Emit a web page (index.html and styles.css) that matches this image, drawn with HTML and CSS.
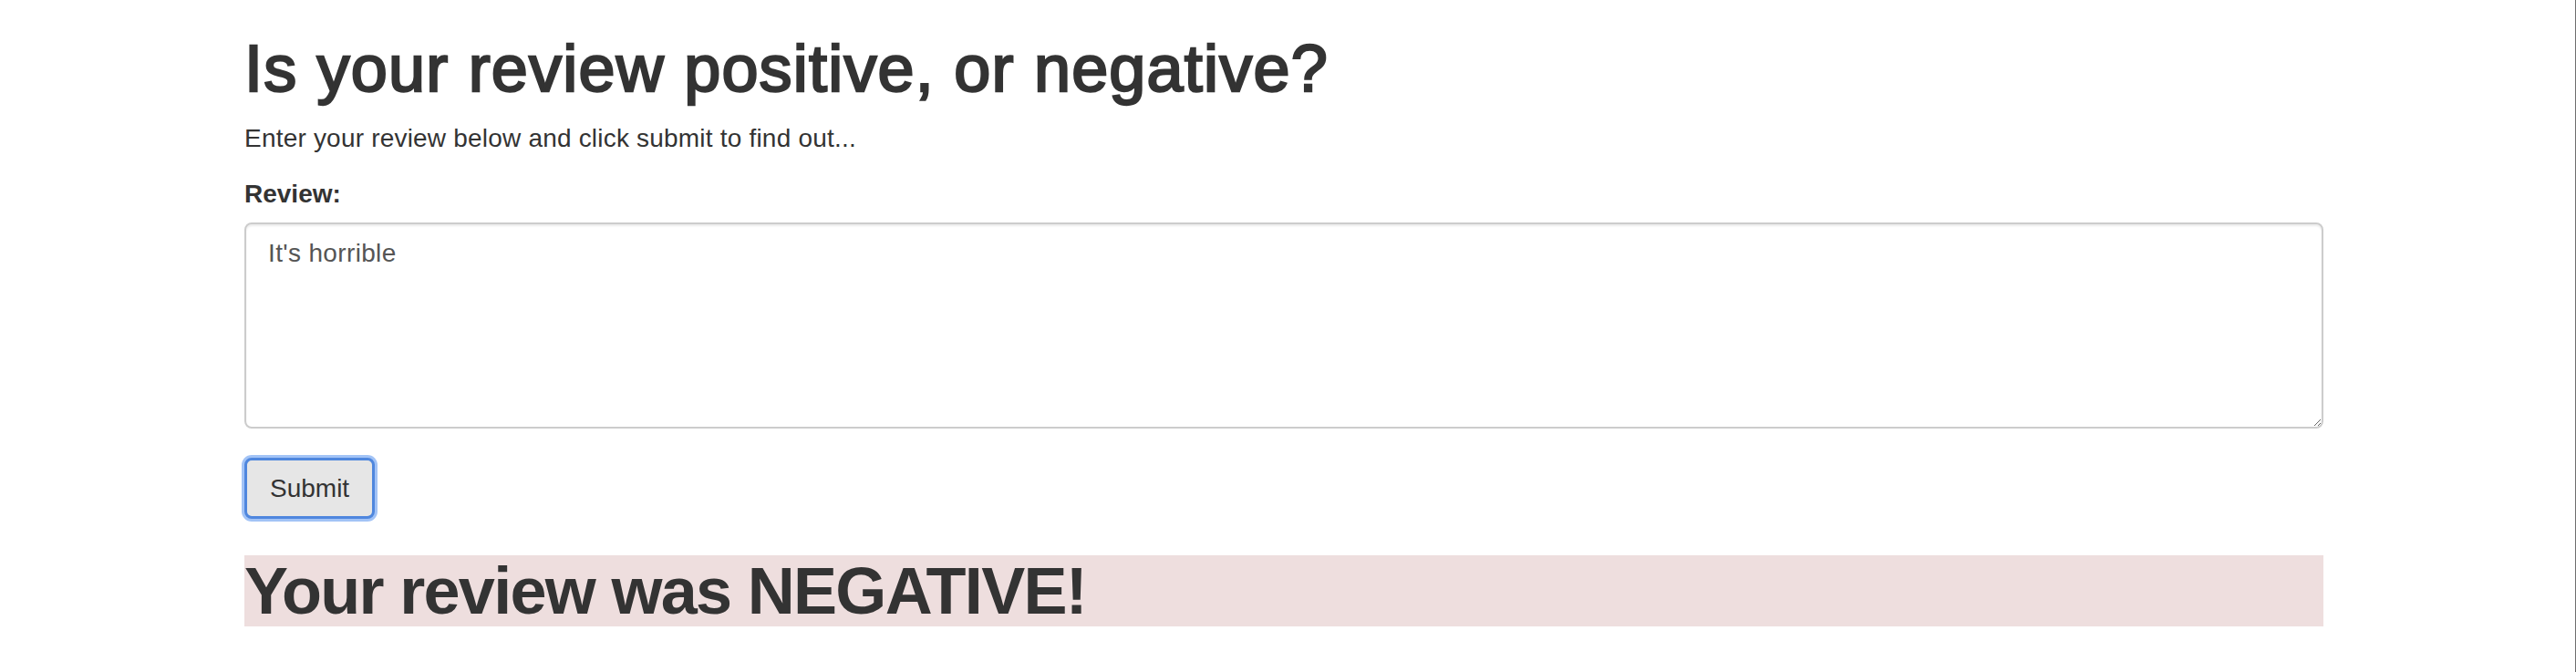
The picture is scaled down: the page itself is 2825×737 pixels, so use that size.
FILE: index.html
```html
<!DOCTYPE html>
<html lang="en">
<head>
<meta charset="utf-8">
<title>Sentiment</title>
<link rel="stylesheet" href="styles.css">
</head>
<body>
<div class="container">
  <h1 class="title">Is your review positive, or negative?</h1>
  <p class="lead-text">Enter your review below and click submit to find out...</p>
  <form class="review-form">
    <label class="field-label" for="review">Review:</label>
    <textarea id="review" class="review-input">It's horrible</textarea>
    <button type="button" class="submit-btn">Submit</button>
  </form>
  <h1 class="result negative">Your review was NEGATIVE!</h1>
</div>
</body>
</html>
```

FILE: styles.css
```css
html {
  height: 100%;
  border-right: 1px solid #6e6e6e;
  background: #fff;
}
body {
  margin: 0;
  font-family: "Liberation Sans", Arial, sans-serif;
  font-size: 28px;
  line-height: 40px;
  color: #333;
}
.container {
  width: 2280px;
  margin: 0 0 0 268px;
  display: flex;
  flex-direction: column;
  align-items: flex-start;
}
.title {
  font-size: 72px;
  line-height: 79px;
  font-weight: 400;
  letter-spacing: 1.2px;
  -webkit-text-stroke: 2.4px #333;
  margin: 36px 0 17px;
}
.lead-text {
  margin: 0 0 21px;
  letter-spacing: 0.2px;
}
.review-form {
  display: flex;
  flex-direction: column;
  align-items: flex-start;
  width: 100%;
}
.field-label {
  font-weight: 700;
  margin-bottom: 11px;
}
.review-input {
  box-sizing: border-box;
  width: 100%;
  height: 226px;
  padding: 12px 24px;
  border: 2px solid #ccc;
  border-radius: 8px;
  box-shadow: inset 0 2px 2px rgba(0, 0, 0, 0.075);
  font-family: "Liberation Sans", Arial, sans-serif;
  font-size: 28px;
  line-height: 40px;
  letter-spacing: 0.35px;
  color: #555;
  margin: 0;
}
.submit-btn {
  margin-top: 32px;
  box-sizing: border-box;
  height: 67px;
  padding: 0 25px;
  border: 3px solid #4f87de;
  border-radius: 8px;
  background: #e6e6e6;
  color: #333;
  font-family: "Liberation Sans", Arial, sans-serif;
  font-size: 28px;
  line-height: 40px;
  box-shadow: 0 0 0 3px rgba(100, 155, 240, 0.6);
}
.result {
  align-self: stretch;
  font-size: 72px;
  line-height: 78px;
  font-weight: 700;
  letter-spacing: -1.7px;
  margin: 40px 0 0;
}
.negative {
  background: #eedede;
}
```
